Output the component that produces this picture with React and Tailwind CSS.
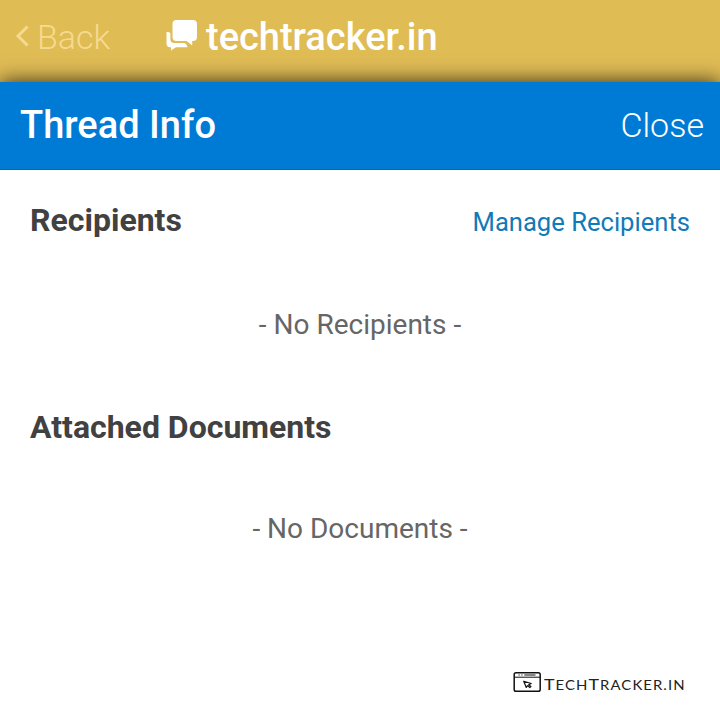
function ChatBubbles() {
  return (
    <svg width="32" height="32" viewBox="0 0 32 32" fill="#fff" className="shrink-0">
      <path d="M10.500 1H27a4 4 0 0 1 4 4v13a4 4 0 0 1-4 4H26.200v4.500L20.500 22H10.500a4 4 0 0 1-4-4V5a4 4 0 0 1 4-4Z" />
      <path d="M0.500 13Q4.400 12.500 4.400 14.500V20Q4.400 24 8.500 24H18.500Q21 25 21.500 28.200H10L5 31.500V28.200H4Q0.500 28.200 0.500 24.500Z" />
    </svg>
  );
}

function BrowserMark() {
  return (
    <svg width="29" height="22" viewBox="0 0 29 22" fill="none" stroke="#111" className="shrink-0">
      <rect x="1.200" y="1.700" width="26" height="18.600" rx="1.800" strokeWidth="1.500" />
      <path d="M1 6.200H27" strokeWidth="1" />
      <path d="M5.500 4h1.200M8.300 4h1.200M11.300 4H22.500" strokeWidth="1.100" />
      <path d="M10.700 10.200L18.200 12.500L15.700 13.700L17.900 15.500L16.800 16.500L14.600 14.600L13.300 16.400Z" strokeWidth="1.200" strokeLinejoin="round" />
    </svg>
  );
}

export default function App() {
  return (
    <div className="flex h-[709px] w-[720px] flex-col overflow-hidden bg-white font-['Roboto',sans-serif]">
      <nav className="flex h-[82px] shrink-0 items-start bg-[#e0bc55] pl-[15px] text-white">
        <div className="mt-[16px] flex w-[151px] items-center text-[#f6da90]">
          <svg width="14" height="24" viewBox="0 0 14 24" fill="none" stroke="currentColor" strokeWidth="3" className="mr-[8px] mb-[2px]">
            <path d="M12.500 2.500L3 12L12.500 21.500" />
          </svg>
          <span className="text-[34px] leading-[42px] font-light">Back</span>
        </div>
        <div className="mt-[16px] flex text-[38px] leading-[42px] font-medium">
          <span className="mt-[3px] mr-[8px]"><ChatBubbles /></span>
          <span>techtracker.in</span>
        </div>
      </nav>
      <header className="z-10 flex h-[88px] shrink-0 items-center justify-between border-b border-[#0765ac] bg-[#007bd5] pr-[16px] pb-[2px] pl-[20px] text-white shadow-[0_0_20px_rgba(0,0,0,0.8)]">
        <h1 className="text-[38px] leading-[44px] font-medium">Thread Info</h1>
        <span className="text-[34px] leading-[44px] font-light">Close</span>
      </header>
      <main className="relative z-20 flex flex-1 flex-col bg-white px-[30px] text-[#414141]">
        <section>
          <div className="mt-[29px] flex h-[42px] items-center justify-between">
            <h2 className="text-[32px] leading-[42px] font-bold">Recipients</h2>
            <a className="mt-[4px] text-[25.600px] leading-[40px] text-[#117ab9]">Manage Recipients</a>
          </div>
          <p className="mt-[63px] text-center text-[28px] leading-[42px] text-[#666]">- No Recipients -</p>
        </section>
        <section>
          <h2 className="mt-[60px] text-[32px] leading-[42px] font-bold">Attached Documents</h2>
          <p className="mt-[60px] text-center text-[28px] leading-[42px] text-[#666]">- No Documents -</p>
        </section>
        <footer className="mt-auto mr-[4px] mb-[12px] flex items-center self-end text-[#222]">
          <BrowserMark />
          <span className="mt-[6px] ml-[1.500px] w-[142.500px] origin-left scale-x-[1.190] font-['Lato',sans-serif] text-[15px] leading-[22px] tracking-[0.900px] whitespace-nowrap">
            T<span className="text-[12.500px]">ECH</span>T<span className="text-[12.500px]">RACKER.IN</span>
          </span>
        </footer>
      </main>
    </div>
  );
}
